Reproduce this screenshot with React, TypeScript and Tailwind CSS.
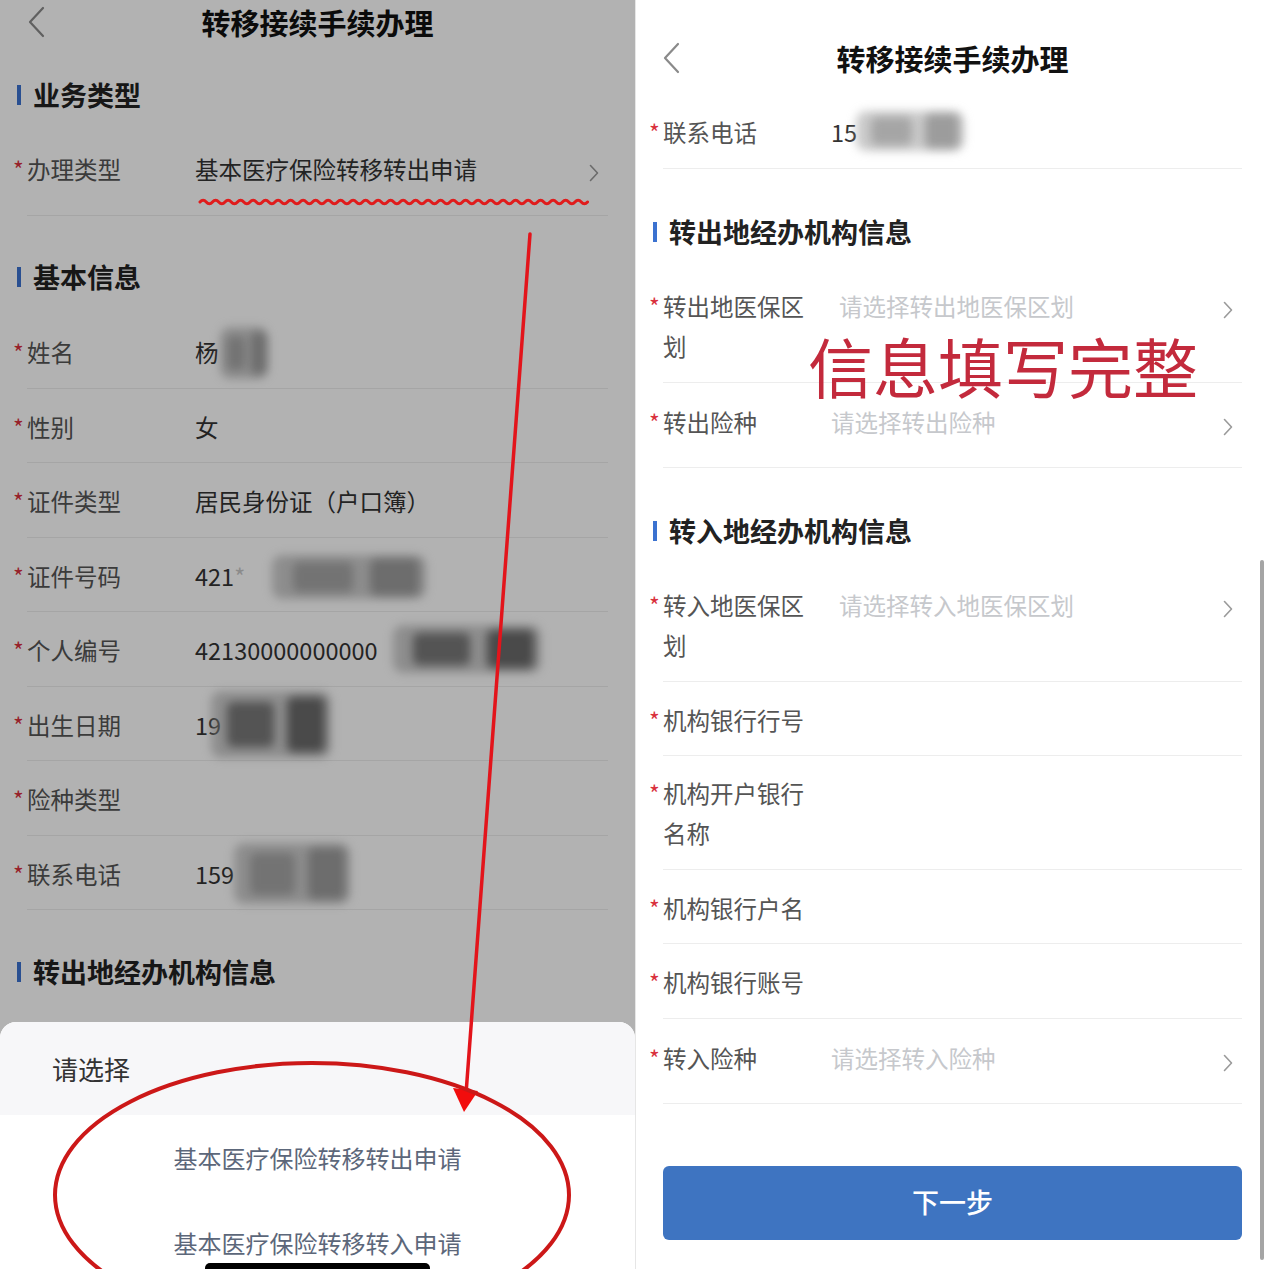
import React from "react";

type Kind = "single" | "select" | "wrap" | "first";

function Chevron({ className = "" }: { className?: string }) {
  return (
    <svg width="10" height="18" viewBox="0 0 10 18" className={className}>
      <path d="M1.5 1.5 8.5 9l-7 7.5" fill="none" stroke="currentColor" strokeWidth="1.6" strokeLinecap="round" strokeLinejoin="round" />
    </svg>
  );
}

function Back() {
  return (
    <svg width="18" height="32" viewBox="0 0 18 32">
      <path d="M16 2 3 16l13 14" fill="none" stroke="#8a8a8a" strokeWidth="2.2" strokeLinecap="round" strokeLinejoin="round" />
    </svg>
  );
}

function Section({ title, className }: { title: string; className: string }) {
  return (
    <div className={`flex items-start pl-[17px] ${className}`}>
      <div className="flex h-[32px] items-center">
        <span className="h-[20px] w-[4px] bg-[#3b72d0]" />
        <span className="ml-[12px] text-[27px] font-bold leading-[32px] text-[#222]">{title}</span>
      </div>
    </div>
  );
}

// scribbled-over personal data
function Blob({ className, dark = false }: { className: string; dark?: boolean }) {
  return (
    <span className={`absolute ${className}`}>
      <span className="absolute inset-[6%] rounded-[10px] bg-[#a0a0a0]/55 blur-[5px]" />
      <span
        className={`absolute inset-y-[20%] left-[18%] w-[34%] rounded-[6px] blur-[5px] ${dark ? "bg-[#555]/70" : "bg-[#777]/45"}`}
      />
      <span
        className={`absolute inset-y-[14%] right-[10%] w-[28%] rounded-[6px] blur-[5px] ${dark ? "bg-[#4a4a4a]/75" : "bg-[#6e6e6e]/50"}`}
      />
    </span>
  );
}

function Row({
  label,
  kind = "single",
  value,
  placeholder,
  chevron = false,
  children
}: {
  label: string;
  kind?: Kind;
  value?: string;
  placeholder?: string;
  chevron?: boolean;
  children?: React.ReactNode;
}) {
  const box =
    kind === "wrap"
      ? "h-[113.5px] pt-[17px]"
      : kind === "select"
        ? "h-[85px] pt-[23px]"
        : kind === "first"
          ? "h-[70px] pt-[7px]"
          : "h-[74.5px] pt-[22px]";
  const lead = kind === "wrap" ? "leading-[40px]" : "leading-[32px]";
  const chev = kind === "wrap" ? "mt-[15px]" : kind === "first" ? "mt-[11px]" : "mt-[12px]";

  return (
    <div className={`mx-[27px] flex items-start border-b border-[#ededed] ${box}`}>
      <span className={`-ml-[14px] w-[14px] shrink-0 text-[23px] text-[#d9303c] ${lead}`}>*</span>
      <div className={`w-[168px] shrink-0 pr-[23px] text-[23.5px] text-[#555] ${lead}`}>{label}</div>
      <div className={`relative flex-1 whitespace-nowrap text-[23.5px] ${lead} ${kind === "wrap" ? "pl-[8px]" : ""}`}>
        {value && <span className="text-[#333]">{value}</span>}
        {placeholder && <span className="text-[#c6c8cc]">{placeholder}</span>}
        {children}
      </div>
      {chevron && <Chevron className={`mr-[9px] shrink-0 text-[#9a9a9a] ${chev}`} />}
    </div>
  );
}

function wavePath() {
  const parts = Array.from({ length: 31 }, () => "q3.125 -3.6 6.25 0 q3.125 3.6 6.25 0");
  return `M200 202 ${parts.join(" ")}`;
}

function LeftPhone() {
  return (
    <div className="relative h-[1269px] w-[635px] shrink-0 overflow-hidden bg-white">
      <div className="grid h-[44px] grid-cols-[80px_1fr_80px] items-center">
        <div className="pl-[27px]">
          <Back />
        </div>
        <div className="text-center text-[29px] font-bold leading-[32px] text-[#111]">转移接续手续办理</div>
        <div />
      </div>

      <Section title="业务类型" className="h-[102px] pt-[35px]" />
      <Row label="办理类型" kind="first" value="基本医疗保险转移转出申请" chevron />

      <Section title="基本信息" className="h-[98px] pt-[45px]" />
      <Row label="姓名" value="杨">
        <Blob className="left-[22px] top-[-12px] h-[58px] w-[54px]" />
      </Row>
      <Row label="性别" value="女" />
      <Row label="证件类型" value="居民身份证（户口簿）" />
      <Row label="证件号码" value="421">
        <span className="text-[#c8c8c8]">*</span>
        <Blob className="left-[66px] top-[-8px] h-[50px] w-[176px]" />
      </Row>
      <Row label="个人编号" value="42130000000000">
        <Blob className="left-[188px] top-[-12px] h-[54px] w-[168px]" dark />
      </Row>
      <Row label="出生日期" value="19">
        <Blob className="left-[8px] top-[-22px] h-[76px] w-[136px]" dark />
      </Row>
      <Row label="险种类型" />
      <Row label="联系电话" value="159">
        <Blob className="left-[31px] top-[-19px] h-[70px] w-[132px]" />
      </Row>

      <Section title="转出地经办机构信息" className="h-[98px] pt-[46px]" />

      {/* modal mask */}
      <div className="absolute inset-0 bg-black/30" />

      <div className="absolute inset-x-0 bottom-0 h-[247px] overflow-hidden rounded-t-[16px] bg-white">
        <div className="flex h-[93px] items-center bg-[#f7f7f9] pl-[52px] text-[26px] text-[#333]">请选择</div>
        <div className="flex h-[85px] items-center justify-center text-[24px] text-[#5c677a]">基本医疗保险转移转出申请</div>
        <div className="flex h-[85px] items-center justify-center text-[24px] text-[#5c677a]">基本医疗保险转移转入申请</div>
        <div className="absolute left-[205px] top-[241px] h-[10px] w-[225px] rounded-full bg-black" />
      </div>

      {/* red marks drawn over the screenshot */}
      <svg className="pointer-events-none absolute inset-0" width="635" height="1269" viewBox="0 0 635 1269">
        <path d={wavePath()} fill="none" stroke="#e01c1c" strokeWidth="3" strokeLinecap="round" />
        <line x1="530" y1="234" x2="466" y2="1094" stroke="#e3141b" strokeWidth="3.5" strokeLinecap="round" />
        <polygon points="453,1088 478,1091 464,1112" fill="#f20d0d" />
        <ellipse cx="312" cy="1195" rx="257" ry="132" fill="none" stroke="#cc1818" strokeWidth="4" />
      </svg>
    </div>
  );
}

function RightPhone() {
  return (
    <div className="relative h-[1269px] w-[634px] shrink-0 overflow-hidden border-l border-[#e6e6e6] bg-white">
      <div className="h-[94px] pt-[42px]">
        <div className="grid h-[32px] grid-cols-[80px_1fr_80px] items-center">
          <div className="pl-[26px]">
            <Back />
          </div>
          <div className="text-center text-[29px] font-bold leading-[32px] text-[#111]">转移接续手续办理</div>
          <div />
        </div>
      </div>

      <Row label="联系电话" value="15">
        <Blob className="left-[18px] top-[-8px] h-[46px] w-[122px]" />
      </Row>

      <Section title="转出地经办机构信息" className="h-[100.5px] pt-[47px]" />
      <Row label="转出地医保区划" kind="wrap" placeholder="请选择转出地医保区划" chevron />
      <Row label="转出险种" kind="select" placeholder="请选择转出险种" chevron />

      <Section title="转入地经办机构信息" className="h-[100.5px] pt-[47px]" />
      <Row label="转入地医保区划" kind="wrap" placeholder="请选择转入地医保区划" chevron />
      <Row label="机构银行行号" />
      <Row label="机构开户银行名称" kind="wrap" />
      <Row label="机构银行户名" />
      <Row label="机构银行账号" />
      <Row label="转入险种" kind="select" placeholder="请选择转入险种" chevron />

      <div className="mx-[27px] mt-[62px] flex h-[74px] items-center justify-center rounded-[6px] bg-[#3e74c1] text-[27px] font-medium text-white">
        下一步
      </div>

      <div className="absolute right-[5px] top-[560px] h-[700px] w-[4px] rounded-full bg-[#a5a5a5]" />

      <div className="absolute left-[172px] top-[337px] text-[65px] leading-[56px] text-[#c32a3c]">信息填写完整</div>
    </div>
  );
}

export default function App() {
  return (
    <div className="flex h-[1269px] w-[1269px] overflow-hidden bg-white font-['Noto_Sans_CJK_SC','Noto_Sans',sans-serif]">
      <LeftPhone />
      <RightPhone />
    </div>
  );
}
